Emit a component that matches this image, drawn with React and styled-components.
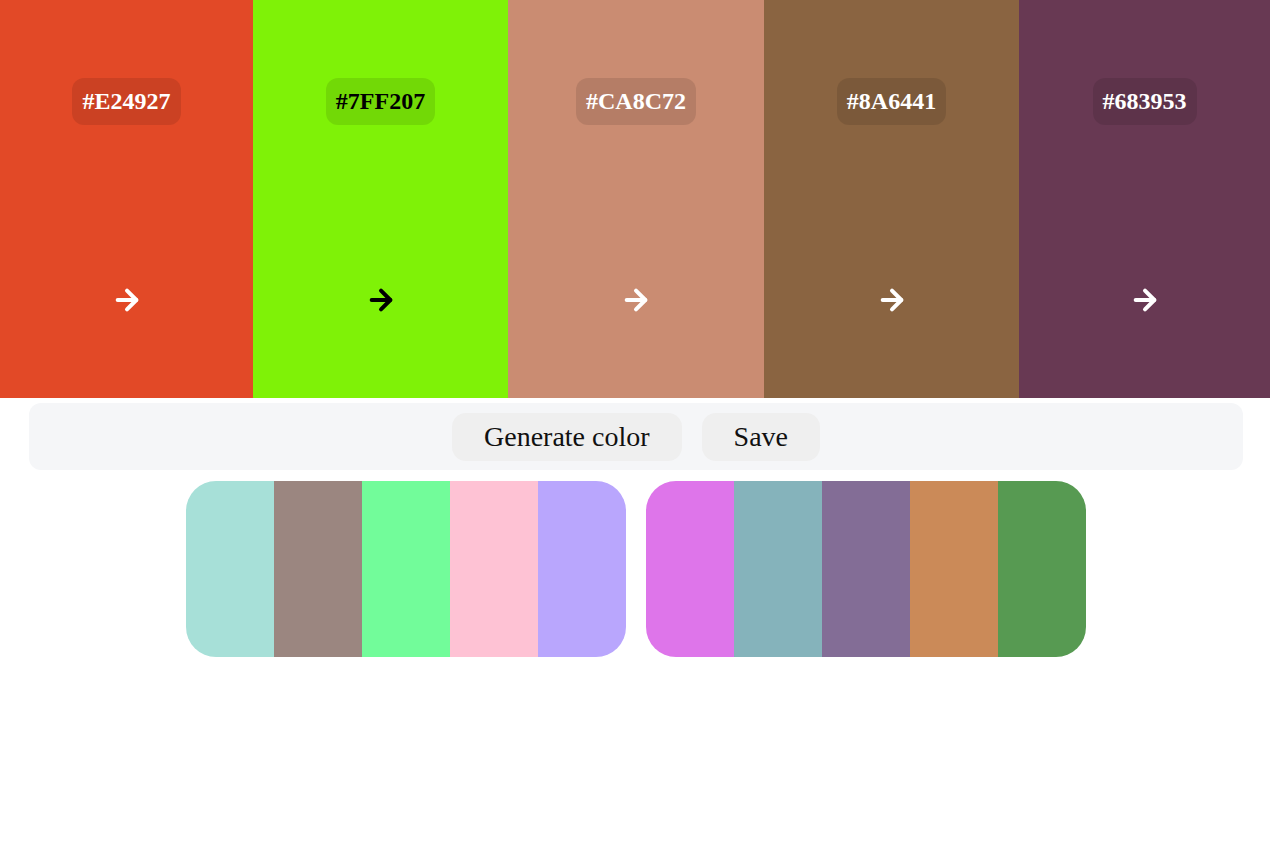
import React, { useState } from 'react';
import styled, { createGlobalStyle } from 'styled-components';
import { ArrowRight } from 'lucide-react';

const GlobalStyle = createGlobalStyle`
  body {
    margin: 0;
    background: #ffffff;
    font-family: "Liberation Serif", "Times New Roman", serif;
  }
`;

const StyledPage = styled.div`
  display: flex;
  flex-direction: column;
  align-items: stretch;
`;

const StyledStrip = styled.div`
  display: grid;
  grid-template-columns: 253fr 255fr 256fr 255fr 251fr;
  height: 398px;
`;

const StyledColumn = styled.div`
  display: flex;
  flex-direction: column;
  align-items: center;
  padding-top: 78px;
  background: ${props => props.color};
  color: ${props => (props.light ? '#000000' : '#ffffff')};
`;

const StyledHex = styled.div`
  padding: 10px 10px;
  border-radius: 12px;
  background: rgba(0, 0, 0, 0.1);
  font-family: "Liberation Serif", "Times New Roman", serif;
  font-weight: 700;
  font-size: 24px;
  line-height: 27px;
`;

const StyledArrow = styled.button`
  display: flex;
  margin-top: 159px;
  padding: 0;
  border: none;
  background: none;
  color: inherit;
  cursor: pointer;
`;

const StyledToolbar = styled.div`
  display: flex;
  justify-content: center;
  gap: 20px;
  margin: 5px 27px 0 29px;
  padding: 10px 0 9px;
  border-radius: 12px;
  background: #f5f6f8;
`;

const StyledButton = styled.button`
  height: 48px;
  padding: 0 32px;
  border: none;
  border-radius: 14px;
  background: #efefef;
  color: #111111;
  font-family: "Liberation Serif", "Times New Roman", serif;
  font-size: 28px;
  cursor: pointer;
`;

const StyledSaved = styled.div`
  display: flex;
  justify-content: center;
  gap: 20px;
  margin-top: 11px;
  padding-left: 2px;
`;

const StyledPalette = styled.div`
  display: flex;
  width: 440px;
  height: 176px;
  border-radius: 30px;
  overflow: hidden;
`;

const StyledSwatch = styled.div`
  flex: 1;
  background: ${props => props.color};
`;

const current = [
  { hex: '#E24927' },
  { hex: '#7FF207', light: true },
  { hex: '#CA8C72' },
  { hex: '#8A6441' },
  { hex: '#683953' },
];

const saved = [
  ['#A7E0D8', '#9B8680', '#72FC9A', '#FEC2D4', '#B9A6FD'],
  ['#DE75EA', '#85B3BB', '#836D96', '#CB8A58', '#579A52'],
];

const App = () => {
  const [colors] = useState(current);

  return (
    <StyledPage>
      <GlobalStyle />
      <StyledStrip>
        {colors.map(c => (
          <StyledColumn key={c.hex} color={c.hex} light={c.light}>
            <StyledHex>{c.hex}</StyledHex>
            <StyledArrow aria-label="next">
              <ArrowRight size={32} strokeWidth={3} />
            </StyledArrow>
          </StyledColumn>
        ))}
      </StyledStrip>

      <StyledToolbar>
        <StyledButton>Generate color</StyledButton>
        <StyledButton>Save</StyledButton>
      </StyledToolbar>

      <StyledSaved>
        {saved.map((palette, i) => (
          <StyledPalette key={i}>
            {palette.map(hex => (
              <StyledSwatch key={hex} color={hex} />
            ))}
          </StyledPalette>
        ))}
      </StyledSaved>
    </StyledPage>
  );
};

export default App;
